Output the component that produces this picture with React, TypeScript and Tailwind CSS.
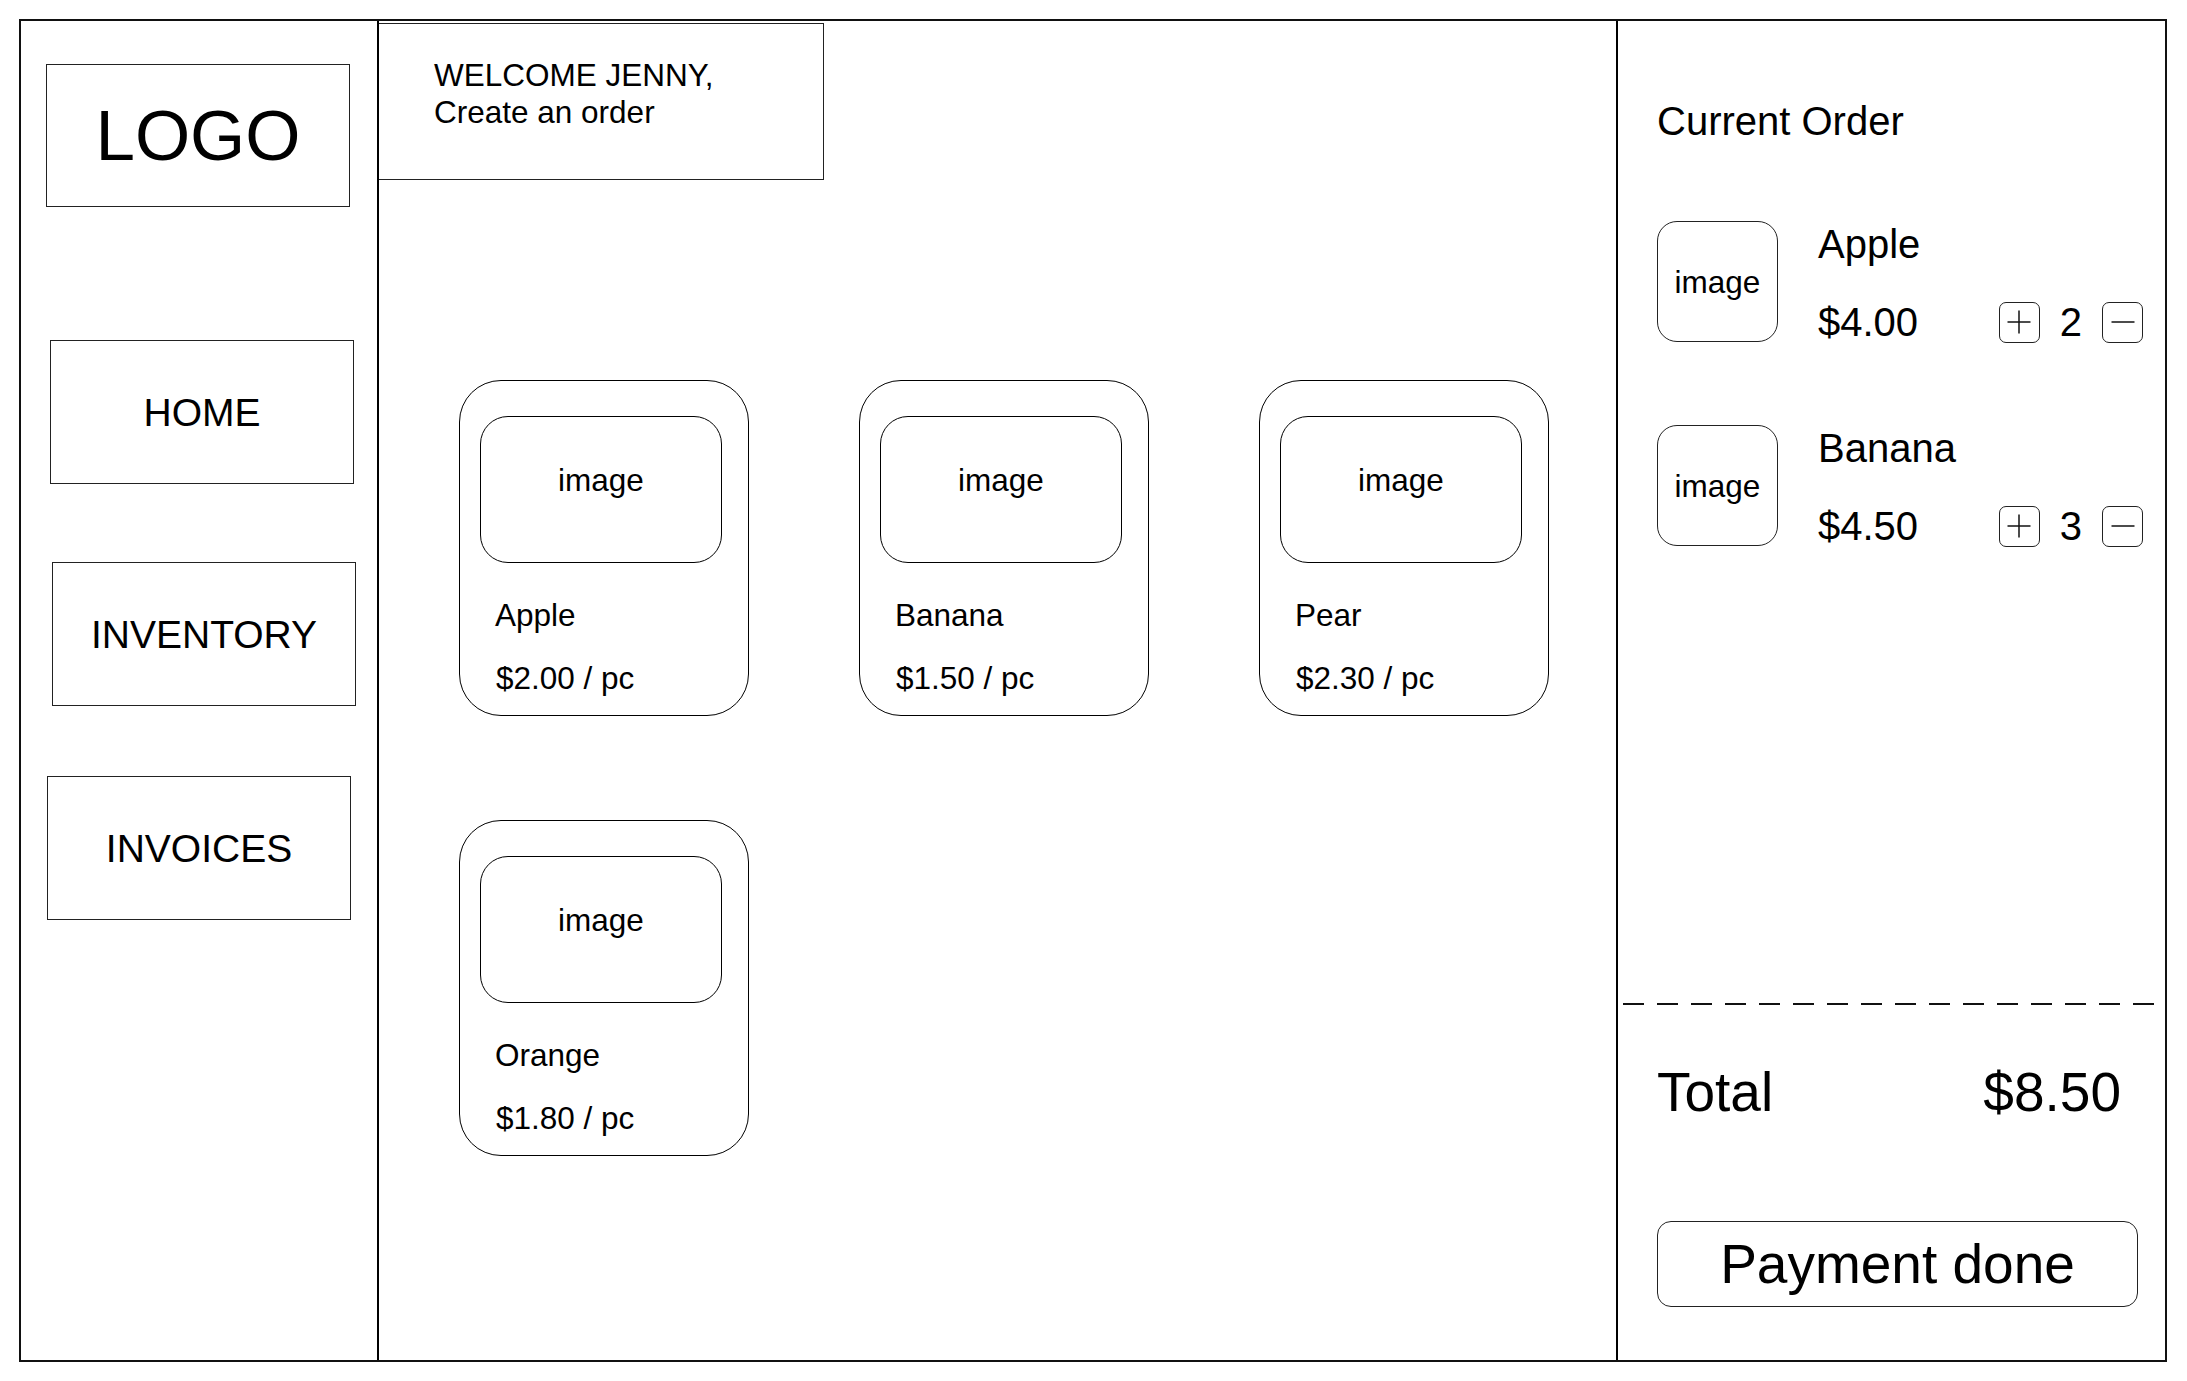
import React from 'react';

const products = [
  { name: 'Apple', price: '$2.00 / pc' },
  { name: 'Banana', price: '$1.50 / pc' },
  { name: 'Pear', price: '$2.30 / pc' },
  { name: 'Orange', price: '$1.80 / pc' },
];

const orderItems = [
  { name: 'Apple', total: '$4.00', qty: 2 },
  { name: 'Banana', total: '$4.50', qty: 3 },
];

const NavBox: React.FC<{ label: string; className: string }> = ({ label, className }) => (
  <div
    className={`w-[304px] h-[144px] border-[1.5px] border-[#222] flex items-center justify-center text-[39px] leading-none ${className}`}
  >
    {label}
  </div>
);

const QtyButton: React.FC<{ plus?: boolean }> = ({ plus }) => (
  <button className="w-[41px] h-[41px] border-[1.5px] border-[#222] rounded-[7px] flex items-center justify-center">
    <svg width="24" height="24" viewBox="0 0 24 24" fill="none" stroke="#111" strokeWidth="1.5">
      {plus && <path d="M12 0.5V23.5" />}
      <path d="M0.5 12H23.5" />
    </svg>
  </button>
);

const ProductCard: React.FC<{ name: string; price: string }> = ({ name, price }) => (
  <div className="w-[290px] h-[336px] border-[1.5px] border-black rounded-[42px] pl-[20px] pt-[35px]">
    <div className="w-[242px] h-[147px] border-[1.5px] border-black rounded-[28px] flex justify-center pt-[45px] text-[31.5px] leading-[36px]">
      image
    </div>
    <p className="mt-[34px] pl-[15px] text-[31.5px] leading-[36px]">{name}</p>
    <p className="mt-[27px] pl-[16px] text-[31.5px] leading-[36px]">{price}</p>
  </div>
);

export default function App() {
  return (
    <div className="bg-white text-black p-[19px] font-['Liberation_Sans',Arial,sans-serif]">
      <div className="w-[2148px] h-[1343px] border-2 border-[#111] flex">
        {/* sidebar */}
        <aside className="w-[358px] shrink-0 border-r-2 border-black flex flex-col">
          <div className="ml-[25px] mt-[43px] w-[304px] h-[143px] border-[1.5px] border-[#222] flex items-center justify-center text-[71px] leading-none">
            LOGO
          </div>
          <NavBox label="HOME" className="ml-[29px] mt-[133px]" />
          <NavBox label="INVENTORY" className="ml-[31px] mt-[78px]" />
          <NavBox label="INVOICES" className="ml-[26px] mt-[70px]" />
        </aside>

        {/* products */}
        <main className="w-[1239px] shrink-0 border-r-2 border-black flex flex-col">
          <div className="mt-[2px] w-[445px] h-[157px] border-y-[1.5px] border-r-[1.5px] border-[#222] pl-[55px] pt-[33px] text-[31.5px] leading-[37px]">
            <p>WELCOME JENNY,</p>
            <p>Create an order</p>
          </div>
          <div className="ml-[80px] mt-[200px] grid grid-cols-[290px_290px_290px] gap-x-[110px] gap-y-[104px]">
            {products.map((p) => (
              <ProductCard key={p.name} name={p.name} price={p.price} />
            ))}
          </div>
        </main>

        {/* current order */}
        <section className="flex-1 flex flex-col">
          <div className="pl-[39px] pr-[22px]">
            <h2 className="mt-[77px] text-[40px] leading-[46px]">Current Order</h2>
            <div className="mt-[77px] flex flex-col gap-[83px]">
              {orderItems.map((item) => (
                <div key={item.name} className="flex items-start h-[121px]">
                  <div className="w-[121px] h-[121px] shrink-0 border-[1.5px] border-[#222] rounded-[20px] flex items-center justify-center text-[31.5px] leading-[36px]">
                    image
                  </div>
                  <div className="ml-[40px] flex-1 h-[123px] flex flex-col justify-between">
                    <p className="text-[40px] leading-[46px]">{item.name}</p>
                    <div className="flex items-center justify-between">
                      <span className="text-[40px] leading-[44px]">{item.total}</span>
                      <div className="flex items-center gap-[20px]">
                        <QtyButton plus />
                        <span className="text-[40px] leading-[41px]">{item.qty}</span>
                        <QtyButton />
                      </div>
                    </div>
                  </div>
                </div>
              ))}
            </div>
          </div>

          <div className="mt-auto ml-[5px] mr-[9px] h-[2px] bg-[repeating-linear-gradient(90deg,#111_0_21px,transparent_21px_34px)]" />

          <div className="mt-[55px] pl-[39px] pr-[44px] flex justify-between text-[55px] leading-[64px]">
            <span>Total</span>
            <span>$8.50</span>
          </div>

          <button className="ml-[39px] mt-[97px] mb-[53px] w-[481px] h-[86px] border-[1.5px] border-[#222] rounded-[14px] flex items-center justify-center text-[55px] leading-none">
            Payment done
          </button>
        </section>
      </div>
    </div>
  );
}
